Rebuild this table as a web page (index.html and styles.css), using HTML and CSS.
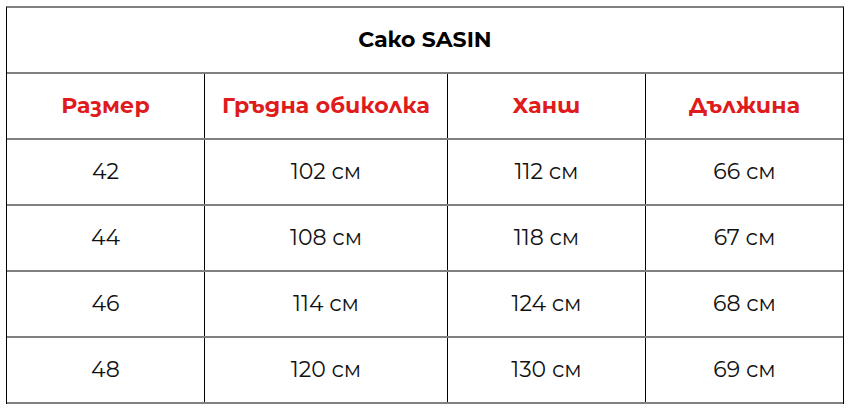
FILE: index.html
```html
<!DOCTYPE html>
<html lang="bg">
<head>
<meta charset="utf-8">
<title>Сако SASIN</title>
<link rel="stylesheet" href="styles.css">
</head>
<body>
<div class="size-table">
  <div class="row title-row"><div class="cell title">Сако SASIN</div></div>
  <div class="row head">
    <div class="cell">Размер</div>
    <div class="cell">Гръдна обиколка</div>
    <div class="cell">Ханш</div>
    <div class="cell">Дължина</div>
  </div>
  <div class="row">
    <div class="cell">42</div><div class="cell">102 см</div><div class="cell">112 см</div><div class="cell">66 см</div>
  </div>
  <div class="row">
    <div class="cell">44</div><div class="cell">108 см</div><div class="cell">118 см</div><div class="cell">67 см</div>
  </div>
  <div class="row">
    <div class="cell">46</div><div class="cell">114 см</div><div class="cell">124 см</div><div class="cell">68 см</div>
  </div>
  <div class="row last">
    <div class="cell">48</div><div class="cell">120 см</div><div class="cell">130 см</div><div class="cell">69 см</div>
  </div>
</div>
</body>
</html>
```
FILE: styles.css
```css
html, body {
  margin: 0;
  padding: 0;
  background: #ffffff;
}
body {
  padding: 6px 0 0 6px;
  font-family: "Montserrat", "Open Sans", "Liberation Sans", sans-serif;
  color: #111111;
}
.size-table {
  width: 838px;
  box-sizing: border-box;
  border-top: 2px solid #808080;
  border-left: 1px solid #000000;
  border-right: 1px solid #000000;
}
.row {
  display: grid;
  grid-template-columns: 197px 243px 198px 198px;
  height: 66px;
  box-sizing: border-box;
  border-bottom: 2px solid #808080;
}
.title-row {
  grid-template-columns: 1fr;
}
.cell {
  display: flex;
  align-items: center;
  justify-content: center;
  box-sizing: border-box;
  padding-bottom: 2px;
  font-size: 22px;
  border-left: 1px solid #000000;
}
.cell:first-child {
  border-left: none;
}
.title {
  font-weight: 700;
  color: #000000;
  font-size: 22px;
}
.head .cell {
  color: #e01b1b;
  font-weight: 700;
  font-size: 22px;
  letter-spacing: 0.2px;
}
```
